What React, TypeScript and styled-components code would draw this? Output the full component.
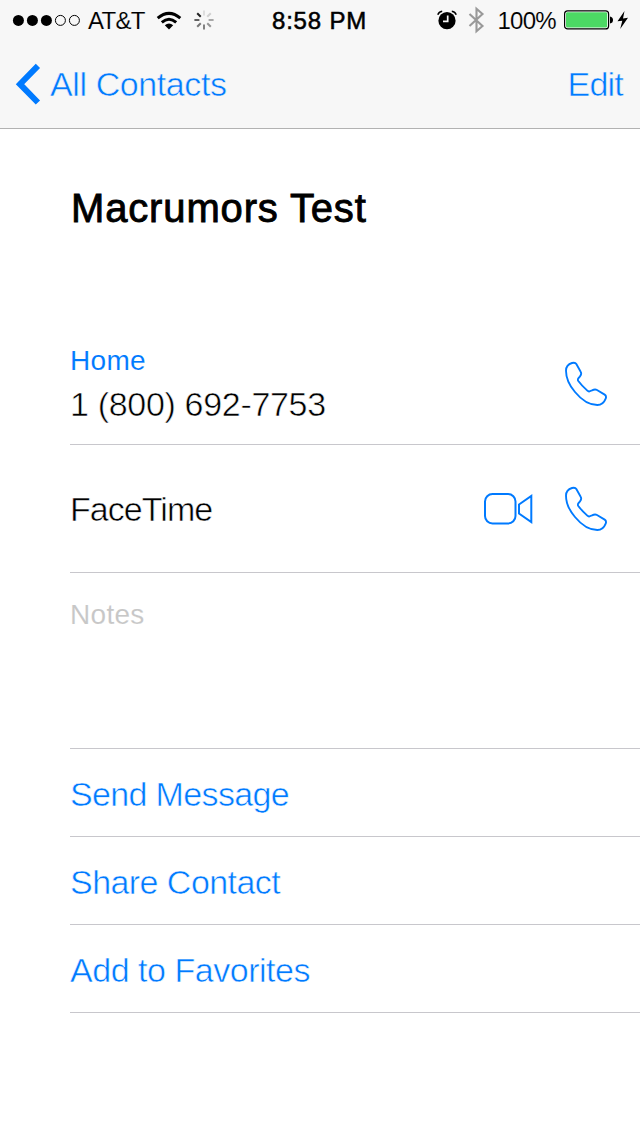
import React from "react";
import styled, { createGlobalStyle } from "styled-components";

const BLUE = "#007aff";

const GlobalStyle = createGlobalStyle`
  * { box-sizing: border-box; }
  body {
    margin: 0;
    background: #fff;
    color: #000;
    font-family: "Liberation Sans", Arial, sans-serif;
  }
`;

const Screen = styled.div`
  width: 640px;
  height: 1136px;
  overflow: hidden;
  background: #fff;
  svg { display: block; flex: none; }
`;

const Header = styled.header`
  height: 129px;
  background: #f7f7f7;
  border-bottom: 1px solid #b2b2b2;
`;

const StatusBar = styled.div`
  display: grid;
  grid-template-columns: 260px 1fr auto;
  align-items: center;
  height: 40px;
  padding: 0 11px 0 12px;
`;

const StatusGroup = styled.div`
  display: flex;
  align-items: center;
  height: 40px;
`;

const Label = styled.span<{
  $size: number;
  $line: number;
  $spacing?: number;
  $color?: string;
  $weight?: "thin" | "slim" | "medium";
  $ground?: string;
}>`
  display: block;
  white-space: nowrap;
  font-size: ${(p) => p.$size}px;
  line-height: ${(p) => p.$line}px;
  letter-spacing: ${(p) => p.$spacing ?? 0}px;
  color: ${(p) => p.$color ?? "#000"};
  -webkit-text-stroke: ${(p) =>
    p.$weight === "thin"
      ? `0.55px ${p.$ground ?? "#fff"}`
      : p.$weight === "slim"
        ? `0.1px ${p.$ground ?? "#fff"}`
        : p.$weight === "medium"
          ? `${p.$size / 46}px currentColor`
          : "0"};
`;

const Carrier = styled(Label)`margin: 1px 11px 0 7px;`;
const Clock = styled(Label)`margin-top: 1px;`;
const Percent = styled(Label)`margin: 1px 8px 0 12px;`;
const Spinner = styled.svg`margin-left: 12px;`;
const Bluetooth = styled.svg`margin-left: 11px;`;
const Bolt = styled.svg`margin-left: 3px;`;

const NavBar = styled.nav`
  display: flex;
  justify-content: space-between;
  align-items: center;
  height: 88px;
  padding: 0 17px 0 15px;
`;

const BackButton = styled.div`
  display: flex;
  align-items: center;
  gap: 9px;
`;

const Content = styled.main`padding-left: 70px;`;

const Name = styled.h1`
  margin: 0;
  height: 194px;
  padding: 55px 0 0 1px;
  font-weight: 400;
`;

const Row = styled.section<{ $height: number; $align?: string }>`
  display: flex;
  align-items: ${(p) => p.$align ?? "center"};
  justify-content: space-between;
  height: ${(p) => p.$height}px;
  padding-right: 32px;
  border-bottom: 1px solid #c8c7cc;
`;

const PhoneValue = styled(Label)`margin-top: 5px;`;
const Notes = styled(Label)`padding-top: 24px;`;
const ActionLabel = styled(Label)`margin-top: 3px;`;
const Actions = styled.div`
  display: flex;
  align-items: center;
  gap: 31px;
`;

const PhoneIcon = () => (
  <svg width="44" height="46" viewBox="0 0 132 138" fill="none" stroke={BLUE} strokeWidth="5.6">
    <path d="M24 6C31 4 34 4 37 9L50 32C53 37 52 41 48 46L43 52C41 55 41 57 43 60C51 71 60 80 70 89C73 92 76 92 79 90L84 88C90 85 94 84 99 87L122 101C127 104 127 108 125 113C120 126 113 132 100 132C76 132 51 115 33 93C16 73 6 50 6 29C6 16 14 9 24 6Z" />
  </svg>
);

const dots = [0, 1, 2, 3, 4];
const ticks = ["#dedede", "#d0d0d0", "#a8a8a8", "#949494", "#808080", "#757575", "#606060", "#222"];
const actions = [
  { text: "Send Message", spacing: -0.65 },
  { text: "Share Contact", spacing: -0.55 },
  { text: "Add to Favorites", spacing: -0.47 },
];

export default function App() {
  return (
    <>
      <GlobalStyle />
      <Screen>
        <Header>
          <StatusBar>
            <StatusGroup>
              <svg width="69" height="12" viewBox="0 0 69 12">
                {dots.map((i) => (
                  <circle key={i} cx={6.4 + i * 14} cy="6.4" r={i < 3 ? 5.5 : 5} fill={i < 3 ? "#000" : "none"} stroke={i < 3 ? "none" : "#000"} />
                ))}
              </svg>
              <Carrier $size={24} $line={28} $ground="#f7f7f7" $weight="slim" $spacing={-0.7}>AT&amp;T</Carrier>
              <svg width="26" height="19" viewBox="0 0 26 19" fill="none" stroke="#000" strokeWidth="3">
                <path d="M1.7 7.2Q13 -2.4 24.3 7.2" />
                <path d="M5.8 11.4Q13 5.2 20.2 11.4" />
                <path d="M13 18.4L8.8 14.2Q13 10.8 17.2 14.2Z" fill="#000" stroke="none" />
              </svg>
              <Spinner width="20" height="20" viewBox="-10 -10 20 20" strokeWidth="2">
                {ticks.map((c, i) => (
                  <line key={i} y1="-4.6" y2="-9.6" stroke={c} transform={`rotate(${i * 45})`} />
                ))}
              </Spinner>
            </StatusGroup>
            <Clock $size={24} $line={28} $weight="medium" $spacing={0.8}>8:58 PM</Clock>
            <StatusGroup>
              <svg width="20" height="20" viewBox="0 0 20 20">
                <circle cx="10" cy="10.7" r="8.6" />
                <path d="M.8 4.8Q1.8 1.8 5.2 1.3M14.8 1.3Q18.2 1.8 19.2 4.8" fill="none" stroke="#000" strokeWidth="1.5" />
                <path d="M10.7 5.5V11.3H6" fill="none" stroke="#f7f7f7" strokeWidth="1.7" />
              </svg>
              <Bluetooth width="17" height="28" viewBox="0 0 17 28" fill="none" stroke="#999" strokeWidth="2.1">
                <path d="M1.5 8L14.5 20L8.5 25.2V2.8L14.5 8L1.5 20" />
              </Bluetooth>
              <Percent $size={24} $line={28} $ground="#f7f7f7" $weight="slim" $spacing={-0.7}>100%</Percent>
              <svg width="50" height="20" viewBox="0 0 50 20">
                <rect x=".6" y=".9" width="44" height="18" rx="3" fill="#fff" stroke="#000" strokeWidth="1.2" />
                <rect x="2" y="2.3" width="41.2" height="15.2" rx="1.4" fill="#4cd964" />
                <path d="M46 6.5Q49 7 49 10T46 13.5Z" />
              </svg>
              <Bolt width="12" height="20" viewBox="0 0 12 20">
                <path d="M7.5 1L.5 11.2L5.3 10.7L3.2 19L11 7.8L6 8.5Z" />
              </Bolt>
            </StatusGroup>
          </StatusBar>
          <NavBar>
            <BackButton>
              <svg width="26" height="42" viewBox="0 0 26 42" fill="none" stroke={BLUE} strokeWidth="6">
                <path d="M22.9 2.9L5 21.2L22.9 39.5" />
              </svg>
              <Label $size={34} $line={40} $color={BLUE} $weight="thin" $ground="#f7f7f7" $spacing={-0.4}>All Contacts</Label>
            </BackButton>
            <Label $size={34} $line={40} $color={BLUE} $weight="thin" $ground="#f7f7f7" $spacing={-0.8}>Edit</Label>
          </NavBar>
        </Header>
        <Content>
          <Name>
            <Label $size={40} $line={48} $spacing={0.85} $weight="medium">Macrumors Test</Label>
          </Name>
          <Row $height={122}>
            <div>
              <Label $size={28} $line={36} $color={BLUE} $weight="slim" $spacing={0.3}>Home</Label>
              <PhoneValue $size={34} $line={40} $weight="thin" $spacing={-0.32}>1 (800) 692-7753</PhoneValue>
            </div>
            <PhoneIcon />
          </Row>
          <Row $height={128}>
            <Label $size={34} $line={40} $weight="thin" $spacing={-0.95}>FaceTime</Label>
            <Actions>
              <svg width="49" height="32" viewBox="0 0 49 32" fill="none" stroke={BLUE} strokeWidth="2">
                <rect x="1" y="1" width="30.5" height="29.5" rx="7.5" />
                <path d="M35 11.5L47.3 3V29L35 20.5Z" />
              </svg>
              <PhoneIcon />
            </Actions>
          </Row>
          <Row $height={176} $align="flex-start">
            <Notes $size={28} $line={36} $color="#c7c7c7" $weight="slim" $spacing={0.3}>Notes</Notes>
          </Row>
          {actions.map(({ text, spacing }) => (
            <Row key={text} $height={88}>
              <ActionLabel $size={34} $line={40} $color={BLUE} $weight="thin" $spacing={spacing}>{text}</ActionLabel>
            </Row>
          ))}
        </Content>
      </Screen>
    </>
  );
}
